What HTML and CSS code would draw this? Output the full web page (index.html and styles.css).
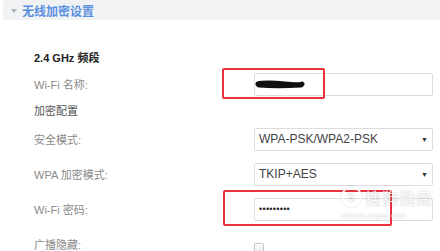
FILE: index.html
```html
<!DOCTYPE html>
<html lang="zh-CN">
<head>
    <meta charset="UTF-8">
    <meta name="viewport" content="width=device-width, initial-scale=1.0">
    <link rel="stylesheet" href="styles.css">
    <title>无线加密设置</title>
</head>
<body>

    <div class="panel-head">
        <span class="caret"></span>
        <span class="panel-title">无线加密设置</span>
    </div>

    <div class="form">

        <div class="band-title">2.4 GHz 频段</div>

        <div class="row first">
            <div class="label">Wi-Fi 名称:</div>
            <div class="field">
                <div class="control">
                    <svg class="scribble" width="50" height="10" viewBox="0 0 50 10">
                        <path d="M3 5 C10 3, 20 4, 30 5 S44 6, 47 5 M4 6 C16 7, 30 7, 46 6" stroke="#111" stroke-width="5" fill="none" stroke-linecap="round"/>
                    </svg>
                </div>
                <div class="mark mark-name"></div>
            </div>
        </div>

        <div class="group-title">加密配置</div>

        <div class="row second">
            <div class="label">安全模式:</div>
            <div class="field">
                <div class="control select">
                    <span>WPA-PSK/WPA2-PSK</span>
                    <span class="arrow">&#9660;</span>
                </div>
            </div>
        </div>

        <div class="row">
            <div class="label">WPA 加密模式:</div>
            <div class="field">
                <div class="control select">
                    <span>TKIP+AES</span>
                    <span class="arrow">&#9660;</span>
                </div>
            </div>
        </div>

        <div class="row">
            <div class="label">Wi-Fi 密码:</div>
            <div class="field">
                <div class="control">
                    <span class="dots">&#8226;&#8226;&#8226;&#8226;&#8226;&#8226;&#8226;&#8226;&#8226;</span>
                </div>
                <div class="mark mark-pass"></div>
                <div class="watermark">
                    <div class="wm-main"><span class="wm-logo">S</span>搜狗指南</div>
                    <div class="wm-url">zhinan.sogou.com</div>
                </div>
            </div>
        </div>

        <div class="row">
            <div class="label">广播隐藏:</div>
            <div class="field">
                <div class="checkbox"></div>
            </div>
        </div>

    </div>

</body>
</html>
```

FILE: styles.css
```css
body {
    margin: 0;
    background-color: #fff;
    font-family: "Liberation Sans", "Noto Sans CJK SC", sans-serif;
    overflow: hidden;
}

.panel-head {
    display: flex;
    align-items: center;
    height: 20px;
    margin-left: 3px;
    padding-left: 8px;
    background-color: #f1f2f4;
    border-radius: 2px 0 0 2px;
}

.caret {
    width: 0;
    height: 0;
    border-left: 3px solid transparent;
    border-right: 3px solid transparent;
    border-top: 4px solid #a9b3bf;
    margin-right: 5px;
    margin-top: 1px;
}

.panel-title {
    font-size: 12px;
    font-weight: bold;
    color: #5a8fe0;
}

.form {
    padding: 28px 7px 0 34px;
}

.band-title {
    height: 20px;
    line-height: 20px;
    font-size: 11px;
    font-weight: bold;
    color: #222;
}

.group-title {
    height: 20px;
    line-height: 20px;
    margin-top: 5px;
    font-size: 11px;
    color: #555;
}

.row {
    display: flex;
    align-items: center;
    height: 24px;
    margin-top: 11px;
}

.row.first {
    margin-top: 4px;
}

.row.second {
    margin-top: 6px;
}

.label {
    width: 220px;
    font-size: 11px;
    color: #8a8a8a;
}

.field {
    position: relative;
    width: 179px;
}

.control {
    display: flex;
    align-items: center;
    box-sizing: border-box;
    height: 23px;
    padding: 0 4px;
    border: 1px solid #dcdcdc;
    border-radius: 2px;
    background-color: #fff;
}

.select {
    justify-content: space-between;
    font-size: 12px;
    color: #444;
}

.arrow {
    font-size: 7px;
    color: #333;
}

.scribble {
    margin-left: -4px;
}

.dots {
    font-size: 9px;
    letter-spacing: 0.3px;
    color: #222;
}

.mark {
    position: absolute;
    box-sizing: border-box;
    border: 2px solid #e8323c;
    border-radius: 2px;
}

.mark-name {
    left: -32px;
    top: -5px;
    width: 103px;
    height: 31px;
}

.mark-pass {
    left: -31px;
    top: -8px;
    width: 169px;
    height: 36px;
}

.watermark {
    position: absolute;
    left: 87px;
    top: -13px;
    color: rgba(255, 255, 255, 0.85);
    text-shadow: 0 0 2px rgba(0, 0, 0, 0.25);
}

.wm-main {
    display: flex;
    align-items: center;
    font-size: 16px;
    letter-spacing: 1px;
}

.wm-logo {
    display: flex;
    align-items: center;
    justify-content: center;
    width: 17px;
    height: 17px;
    margin-right: 3px;
    border: 2px solid rgba(255, 255, 255, 0.85);
    border-radius: 50%;
    font-size: 12px;
    font-weight: bold;
    box-shadow: 0 0 2px rgba(0, 0, 0, 0.2);
}

.wm-url {
    margin-top: 3px;
    font-size: 7px;
    letter-spacing: 0.5px;
    color: rgba(255, 255, 255, 0.8);
}

.checkbox {
    width: 8px;
    height: 9px;
    margin-top: 8px;
    border: 1px solid #c8c8c8;
    border-radius: 2px;
    background: linear-gradient(#fff, #e6e6e6);
}
```
